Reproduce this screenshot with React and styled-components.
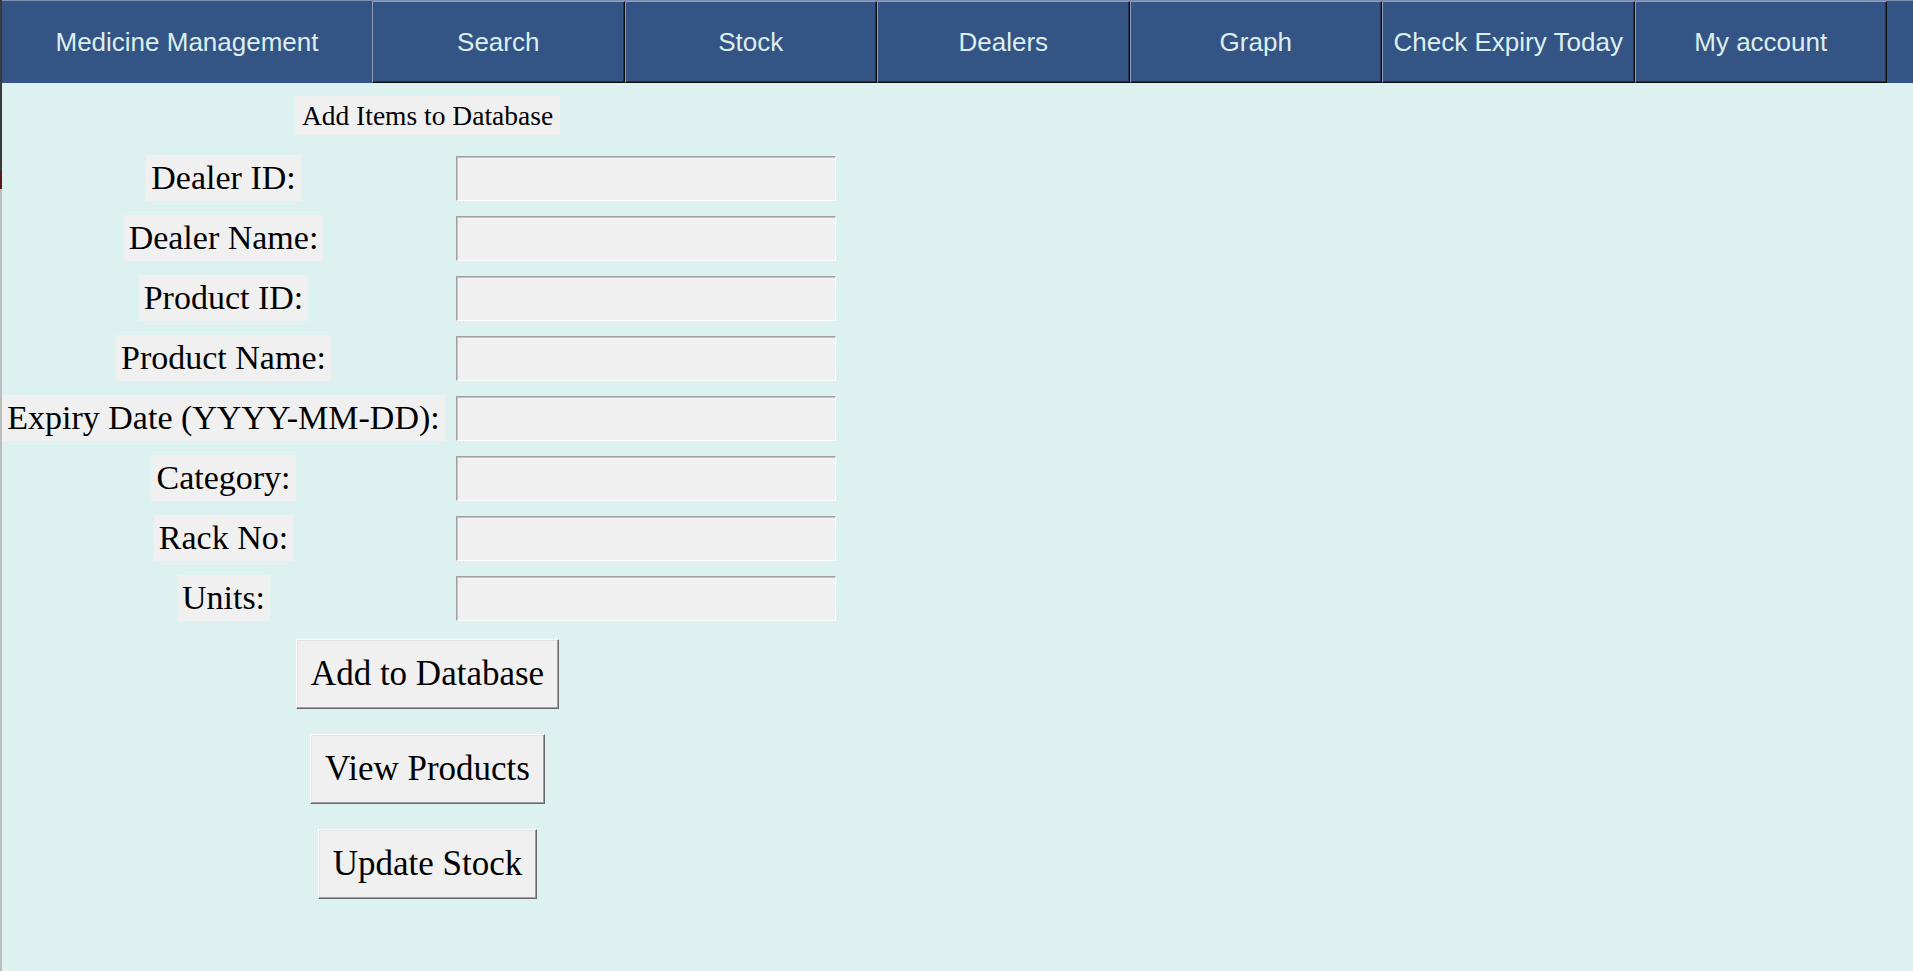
import React from "react";
import styled, { createGlobalStyle } from "styled-components";

const GlobalStyle = createGlobalStyle`
  html, body {
    margin: 0;
    padding: 0;
    background: #dcf1f0;
  }
  #root {
    min-height: 100vh;
  }
`;

const NAV_ITEMS = [
  "Search",
  "Stock",
  "Dealers",
  "Graph",
  "Check Expiry Today",
  "My account",
];

const FIELDS = [
  "Dealer ID:",
  "Dealer Name:",
  "Product ID:",
  "Product Name:",
  "Expiry Date (YYYY-MM-DD):",
  "Category:",
  "Rack No:",
  "Units:",
];

const ACTIONS = ["Add to Database", "View Products", "Update Stock"];

export default function App() {
  return (
    <>
      <GlobalStyle />
      <Window>
        <NavBar>
          <NavTitle>Medicine Management</NavTitle>
          {NAV_ITEMS.map((item) => (
            <NavButton key={item}>{item}</NavButton>
          ))}
        </NavBar>
        <Form>
          <Title>Add Items to Database</Title>
          {FIELDS.map((field) => (
            <React.Fragment key={field}>
              <FieldLabel>{field}</FieldLabel>
              <Entry />
            </React.Fragment>
          ))}
          <ButtonStack>
            {ACTIONS.map((action) => (
              <ActionButton key={action}>{action}</ActionButton>
            ))}
          </ButtonStack>
        </Form>
      </Window>
    </>
  );
}

const Window = styled.div`
  min-height: 100vh;
  box-sizing: border-box;
  border-left: 2px solid #bdbdbd;
  border-image: linear-gradient(#3a3a3a 0 172px, #5a1a1a 172px 190px, #bdbdbd 190px) 1;
  background: #dcf1f0;
`;

const NavBar = styled.div`
  display: flex;
  height: 83px;
  background: #345486;
  border-top: 1px solid #7d8fae;
  box-sizing: border-box;
`;

const NavTitle = styled.div`
  width: 370px;
  display: flex;
  align-items: center;
  justify-content: center;
  font-family: "Liberation Sans", Arial, sans-serif;
  font-size: 26px;
  color: #dcefee;
`;

const NavButton = styled.button`
  width: 252.5px;
  height: 100%;
  box-sizing: border-box;
  margin: 0;
  padding: 0;
  background: #345486;
  color: #dcefee;
  font-family: "Liberation Sans", Arial, sans-serif;
  font-size: 26px;
  white-space: nowrap;
  border: 1px solid;
  border-color: #8d9dbb #0c0c0c #0c0c0c #8d9dbb;
  box-shadow: inset -1px -1px 0 #1f3357;
  cursor: pointer;
`;

const Form = styled.div`
  display: grid;
  grid-template-columns: 437px 408px;
  justify-items: center;
  align-items: center;
  row-gap: 14px;
  padding-left: 3px;
  padding-top: 13px;
  width: max-content;
`;

const Title = styled.div`
  grid-column: 1 / -1;
  margin-bottom: 6px;
  height: 39px;
  line-height: 39px;
  padding: 0 7px;
  background: #f0f0f0;
  font-family: "Liberation Serif", "Times New Roman", serif;
  font-size: 27.5px;
  color: #000;
`;

const FieldLabel = styled.div`
  height: 46px;
  line-height: 46px;
  padding: 0 5px;
  background: #f0f0f0;
  font-family: "Liberation Serif", "Times New Roman", serif;
  font-size: 34px;
  color: #000;
  white-space: nowrap;
`;

const Entry = styled.input`
  justify-self: start;
  width: 380px;
  height: 45px;
  box-sizing: border-box;
  margin: 0 0 0 14px;
  padding: 0 4px;
  background: #f0f0f0;
  border: 1px solid;
  border-color: #a0a0a0 #ffffff #ffffff #a0a0a0;
  box-shadow: inset 1px 1px 0 #c4c4c4;
  font-family: "Liberation Serif", serif;
  font-size: 28px;
  outline: none;
`;

const ButtonStack = styled.div`
  grid-column: 1 / -1;
  display: flex;
  flex-direction: column;
  align-items: center;
  gap: 25px;
  margin-top: 4px;
`;

const ActionButton = styled.button`
  height: 70px;
  box-sizing: border-box;
  margin: 0;
  padding: 0 14px;
  background: #f0f0f0;
  color: #000;
  font-family: "Liberation Serif", "Times New Roman", serif;
  font-size: 35px;
  white-space: nowrap;
  border: 1px solid;
  border-color: #ffffff #696969 #696969 #ffffff;
  box-shadow: inset -1px -1px 0 #a0a0a0, inset 1px 1px 0 #e3e3e3;
  cursor: pointer;
`;
